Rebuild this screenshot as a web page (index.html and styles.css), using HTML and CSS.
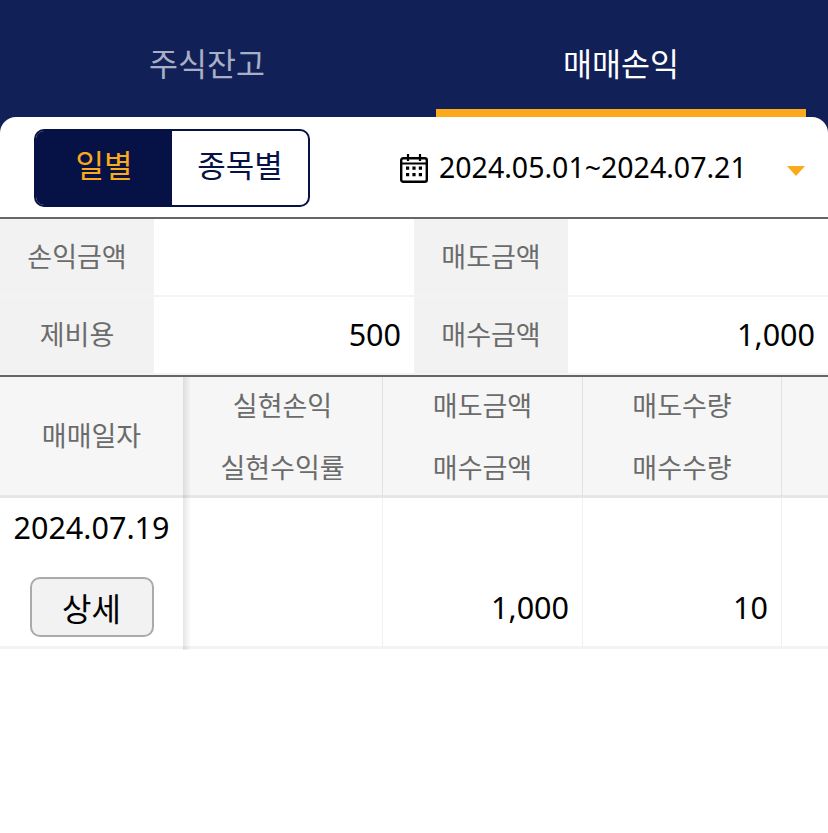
FILE: index.html
```html
<!DOCTYPE html>
<html lang="ko">
<head>
    <meta charset="UTF-8">
    <meta name="viewport" content="width=device-width, initial-scale=1.0">
    <title>매매손익</title>
    <link rel="stylesheet" href="styles.css">
</head>
<body>
    <div class="tabs">
        <div class="tab">주식잔고</div>
        <div class="tab active">매매손익</div>
    </div>

    <div class="sheet">
        <div class="filter-bar">
            <div class="toggle">
                <div class="toggle-item on">일별</div>
                <div class="toggle-item">종목별</div>
            </div>
            <div class="period">
                <svg class="cal-icon" width="28" height="30" viewBox="0 0 28 30">
                    <rect x="1.2" y="5.2" width="25.6" height="23.6" rx="2" fill="none" stroke="#000" stroke-width="2.4"/>
                    <path d="M1.2 10.5H26.8" stroke="#000" stroke-width="2"/>
                    <path d="M8 1V8M20 1V8" stroke="#000" stroke-width="2.2"/>
                    <path d="M6 13.5h3.2v3.2H6zM12.4 13.5h3.2v3.2h-3.2zM18.8 13.5H22v3.2h-3.2zM6 20h3.2v3.2H6zM12.4 20h3.2v3.2h-3.2zM18.8 20H22v3.2h-3.2z" fill="#000"/>
                </svg>
                <span class="period-text">2024.05.01~2024.07.21</span>
                <span class="caret"></span>
            </div>
        </div>

        <div class="summary">
            <div class="summary-label">손익금액</div>
            <div class="summary-value"></div>
            <div class="summary-label">매도금액</div>
            <div class="summary-value"></div>
            <div class="summary-label">제비용</div>
            <div class="summary-value">500</div>
            <div class="summary-label">매수금액</div>
            <div class="summary-value">1,000</div>
        </div>

        <div class="grid">
            <div class="fixed-col">
                <div class="head-cell">매매일자</div>
                <div class="date-cell">
                    <div class="date-text">2024.07.19</div>
                    <button class="detail-btn">상세</button>
                </div>
            </div>
            <div class="scroll-col col-1">
                <div class="head-cell stacked"><span>실현손익</span><span>실현수익률</span></div>
                <div class="body-cell"></div>
            </div>
            <div class="scroll-col col-2">
                <div class="head-cell stacked"><span>매도금액</span><span>매수금액</span></div>
                <div class="body-cell">1,000</div>
            </div>
            <div class="scroll-col col-3">
                <div class="head-cell stacked"><span>매도수량</span><span>매수수량</span></div>
                <div class="body-cell">10</div>
            </div>
            <div class="scroll-col col-4">
                <div class="head-cell stacked"></div>
                <div class="body-cell"></div>
            </div>
        </div>
    </div>
</body>
</html>
```

FILE: styles.css
```css
:root {
    --navy: #122058;
    --dark-navy: #061245;
    --orange: #fbaa1b;
    --label: #6b6b6b;
}

* {
    box-sizing: border-box;
    margin: 0;
    padding: 0;
}

html, body {
    height: 100%;
}

body {
    font-family: "Noto Sans", "Noto Sans CJK KR", sans-serif;
    background: var(--navy);
    color: #000;
    overflow: hidden;
}

.tabs {
    display: flex;
    height: 117px;
}

.tab {
    width: 414px;
    padding-top: 41px;
    text-align: center;
    font-size: 31.5px;
    line-height: 46px;
    color: #a9afc4;
}

.tab.active {
    margin: 0 22px;
    width: 370px;
    color: #fff;
    border-bottom: 8px solid var(--orange);
}

.sheet {
    background: #fff;
    border-radius: 16px 16px 0 0;
    height: 716px;
}

.filter-bar {
    display: flex;
    align-items: center;
    height: 102px;
    padding: 12px 0 10px 34px;
    border-bottom: 2px solid #666;
}

.toggle {
    display: flex;
    width: 276px;
    height: 78px;
    border: 2px solid var(--dark-navy);
    border-radius: 10px;
    overflow: hidden;
}

.toggle-item {
    flex: 1;
    text-align: center;
    font-size: 31px;
    line-height: 68px;
    color: var(--dark-navy);
}

.toggle-item.on {
    flex: 0 0 136px;
    background: var(--dark-navy);
    color: var(--orange);
}

.period {
    display: flex;
    align-items: center;
    margin-left: 90px;
}

.cal-icon {
    flex: none;
}

.period-text {
    margin: -3px 0 0 11px;
    font-size: 28.5px;
    white-space: nowrap;
}

.caret {
    margin-left: 40px;
    margin-top: 5px;
    border-left: 9px solid transparent;
    border-right: 9px solid transparent;
    border-top: 10px solid var(--orange);
}

.summary {
    display: grid;
    grid-template-columns: 154px 260px 154px 260px;
    grid-auto-rows: 78px;
    height: 158px;
    border-bottom: 2px solid #666;
}

.summary-label,
.summary-value {
    border-bottom: 2px solid #f4f4f4;
    font-size: 30.5px;
    line-height: 74px;
}

.summary-label {
    background: #f2f2f2;
    color: var(--label);
    text-align: center;
    font-size: 27px;
    line-height: 76px;
}

.summary-value {
    text-align: right;
    padding-right: 13px;
}

.grid {
    display: flex;
    overflow: hidden;
}

.fixed-col {
    position: relative;
    z-index: 1;
    flex: 0 0 183px;
    height: 273px;
}

/* shadow of the frozen column over the scrolled cells */
.fixed-col::after {
    content: "";
    position: absolute;
    top: 0;
    bottom: 0;
    left: 100%;
    width: 8px;
    background: linear-gradient(to right, rgba(0, 0, 0, 0.1), rgba(0, 0, 0, 0));
}

.scroll-col {
    flex: none;
}

.col-1 { width: 200px; }
.col-2 { width: 200px; }
.col-3 { width: 199px; }
.col-4 { width: 100px; }

.head-cell {
    height: 121px;
    background: #f6f6f6;
    border-bottom: 3px solid #e6e6e6;
    color: var(--label);
    font-size: 27px;
    line-height: 118px;
    text-align: center;
}

.scroll-col .head-cell {
    border-right: 1px solid #e2e2e2;
}

.col-4 .head-cell,
.col-4 .body-cell {
    border-right: 0;
}

.stacked {
    display: flex;
    flex-direction: column;
    line-height: 62px;
}

.stacked span:first-child {
    margin-top: -2px;
}

.date-cell {
    height: 151px;
    background: #fff;
    border-bottom: 3px solid #f3f3f3;
    text-align: center;
}

.date-text {
    padding-top: 6px;
    font-size: 30.5px;
    line-height: 46px;
}

.detail-btn {
    display: block;
    width: 124px;
    height: 60px;
    margin: 27px auto 0;
    background: #f2f2f2;
    border: 2px solid #aaa;
    border-radius: 10px;
    font-family: inherit;
    font-size: 32px;
    color: #000;
}

.body-cell {
    height: 151px;
    border-bottom: 3px solid #f3f3f3;
    border-right: 1px solid #f0f0f0;
    padding: 84px 13px 0 0;
    font-size: 30.5px;
    line-height: 50px;
    text-align: right;
}
```
